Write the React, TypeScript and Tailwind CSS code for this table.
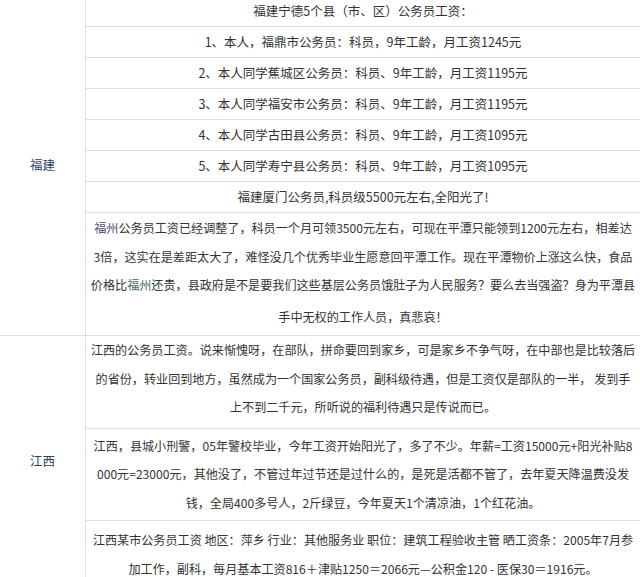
import React from 'react';

const font = { fontFamily: '"Microsoft YaHei", "Noto Sans CJK SC", "Noto Sans", sans-serif' };

const fujianRows = [
  '福建宁德5个县（市、区）公务员工资：',
  '1、本人，福鼎市公务员：科员，9年工龄，月工资1245元',
  '2、本人同学蕉城区公务员：科员、9年工龄，月工资1195元',
  '3、本人同学福安市公务员：科员、9年工龄，月工资1195元',
  '4、本人同学古田县公务员：科员、9年工龄，月工资1095元',
  '5、本人同学寿宁县公务员：科员、9年工龄，月工资1095元',
  '福建厦门公务员,科员级5500元左右,全阳光了!',
];

function Para({ lines, className }: { lines: string[]; className: string }) {
  return (
    <div className={`border-b border-[#dedede] px-[2px] text-center text-[12.1px] ${className}`}>
      {lines.map((l, i) => (
        <div key={i} className="whitespace-nowrap leading-[28.5px]">
          {l}
        </div>
      ))}
    </div>
  );
}

export default function App() {
  return (
    <div className="w-[640px] h-[577px] overflow-hidden bg-white text-[12.5px] text-[#333]" style={font}>
      <div className="-mt-[4px]">
        {/* 福建 */}
        <div className="flex border-b border-[#dedede]">
          <div className="w-[86px] shrink-0 border-r border-[#dedede] flex items-center justify-center text-[#2b3f5e]">
            福建
          </div>
          <div className="flex-1 flex flex-col">
            {fujianRows.map((r, i) => (
              <div key={i} className="h-[31px] border-b border-[#dedede] flex items-center justify-center whitespace-nowrap">
                {r}
              </div>
            ))}
            <div className="px-[2px] pt-[1px] pb-[4px] text-center text-[12.1px]">
              <div className="whitespace-nowrap leading-[28.5px]">
                <span className="text-[#5b4a7a]">福州</span>公务员工资已经调整了，科员一个月可领3500元左右，可现在平潭只能领到1200元左右，相差达
              </div>
              <div className="whitespace-nowrap leading-[28.5px]">
                3倍，这实在是差距太大了，难怪没几个优秀毕业生愿意回平潭工作。现在平潭物价上涨这么快，食品
              </div>
              <div className="whitespace-nowrap leading-[28.5px]">
                价格比<span className="text-[#3f6a6a]">福州</span>还贵，县政府是不是要我们这些基层公务员饿肚子为人民服务？要么去当强盗？身为平潭县
              </div>
              <div className="whitespace-nowrap leading-[28.5px] mt-[3px]">手中无权的工作人员，真悲哀！</div>
            </div>
          </div>
        </div>

        {/* 江西 */}
        <div className="flex h-[250px]">
          <div className="w-[86px] shrink-0 border-r border-[#dedede] flex items-center justify-center text-[#2b3f5e]">
            江西
          </div>
          <div className="flex-1 flex flex-col">
            <Para
              className="pt-[0px] pb-[6px]"
              lines={[
                '江西的公务员工资。说来惭愧呀，在部队，拼命要回到家乡，可是家乡不争气呀，在中部也是比较落后',
                '的省份，转业回到地方，虽然成为一个国家公务员，副科级待遇，但是工资仅是部队的一半， 发到手',
                '上不到二千元，所听说的福利待遇只是传说而已。',
              ]}
            />
            <Para
              className="pt-[3px] pb-[3px]"
              lines={[
                '江西，县城小刑警，05年警校毕业，今年工资开始阳光了，多了不少。年薪=工资15000元+阳光补贴8',
                '000元=23000元，其他没了，不管过年过节还是过什么的，是死是活都不管了，去年夏天降温费没发',
                '钱，全局400多号人，2斤绿豆，今年夏天1个清凉油，1个红花油。',
              ]}
            />
            <div className="px-[2px] pt-[5px] text-center text-[12.1px]">
              <div className="whitespace-nowrap leading-[28.5px]">
                江西某市公务员工资 地区：萍乡 行业：其他服务业 职位：建筑工程验收主管 晒工资条：2005年7月参
              </div>
              <div className="whitespace-nowrap leading-[28.5px]">
                加工作，副科，每月基本工资816＋津贴1250＝2066元—公积金120 - 医保30＝1916元。
              </div>
            </div>
          </div>
        </div>
      </div>
    </div>
  );
}
